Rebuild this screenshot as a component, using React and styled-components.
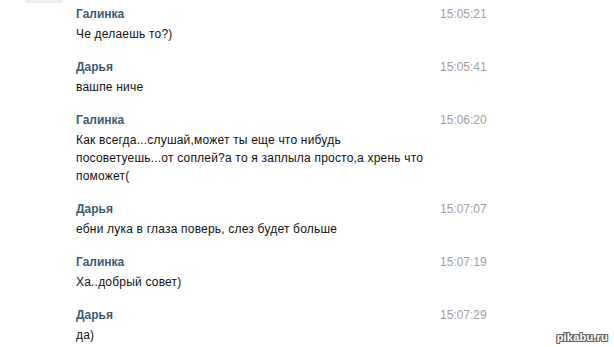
import React from 'react';
import styled, { createGlobalStyle } from 'styled-components';

const GlobalStyle = createGlobalStyle`
  html, body {
    margin: 0;
    padding: 0;
    background: #fff;
  }
  body {
    font-family: "Liberation Sans", Arial, sans-serif;
    overflow: hidden;
  }
`;

const Page = styled.div`
  position: relative;
  width: 614px;
  height: 347px;
  overflow: hidden;
  background: #fff;
`;

// faint remains of the previous row cut by the top edge
const Leftover = styled.div`
  width: 38px;
  height: 3px;
  margin-left: 25px;
  margin-bottom: 2px;
  border-radius: 0 0 2px 2px;
  background: #eeeeee;
`;

const Log = styled.div`
  display: flex;
  flex-direction: column;
  gap: 15px;
  padding-left: 76px;
`;

const Message = styled.div`
  display: grid;
  grid-template-columns: 364px auto;
  grid-template-rows: 18px auto;
  row-gap: 2px;
`;

const Author = styled.div`
  font-size: 12px;
  line-height: 18px;
  font-weight: bold;
  color: #3d5a73;
`;

const Time = styled.div`
  font-size: 12px;
  line-height: 18px;
  color: #a0a0a0;
`;

const Text = styled.div`
  grid-column: 1 / -1;
  font-size: 12px;
  line-height: 18px;
  letter-spacing: 0.2px;
  color: #111;
  white-space: pre-line;
`;

const Watermark = styled.div`
  position: absolute;
  right: 6px;
  bottom: 4px;
  font-size: 11px;
  font-weight: bold;
  color: #fff;
  letter-spacing: 0.2px;
  text-shadow:
    1px 0 0 #666, -1px 0 0 #666, 0 1px 0 #666, 0 -1px 0 #666,
    1px 1px 0 #666, -1px -1px 0 #666, 1px -1px 0 #666, -1px 1px 0 #666;
`;

const messages = [
  { author: 'Галинка', time: '15:05:21', text: 'Че делаешь то?)' },
  { author: 'Дарья', time: '15:05:41', text: 'вашпе ниче' },
  {
    author: 'Галинка',
    time: '15:06:20',
    text: 'Как всегда...слушай,может ты еще что нибудь\nпосоветуешь...от соплей?а то я заплыла просто,а хрень что\nпоможет(',
  },
  { author: 'Дарья', time: '15:07:07', text: 'ебни лука в глаза поверь, слез будет больше' },
  { author: 'Галинка', time: '15:07:19', text: 'Ха..добрый совет)' },
  { author: 'Дарья', time: '15:07:29', text: 'да)' },
];

export default function App() {
  return (
    <Page>
      <GlobalStyle />
      <Leftover />
      <Log>
        {messages.map((m, i) => (
          <Message key={i}>
            <Author>{m.author}</Author>
            <Time>{m.time}</Time>
            <Text>{m.text}</Text>
          </Message>
        ))}
      </Log>
      <Watermark>pikabu.ru</Watermark>
    </Page>
  );
}
